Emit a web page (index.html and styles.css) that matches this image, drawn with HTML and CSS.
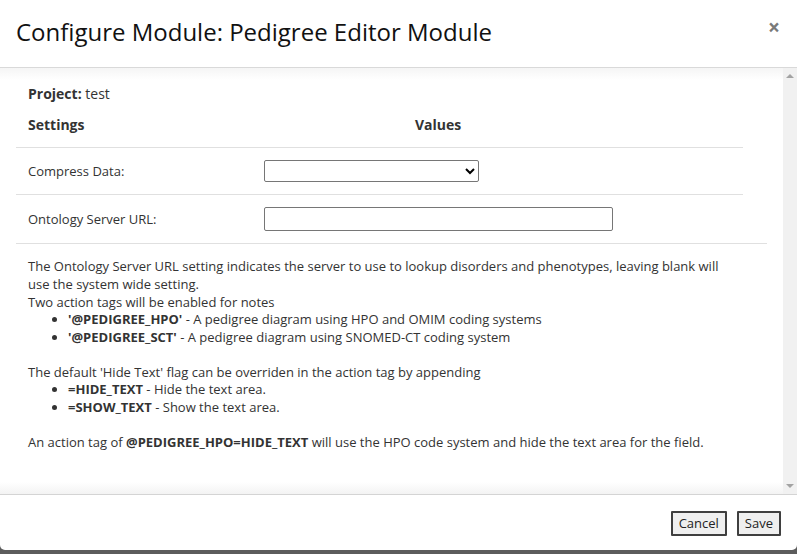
FILE: index.html
```html
<!DOCTYPE html>
<html>
<head>
<meta charset="utf-8">
<link rel="stylesheet" href="styles.css">
</head>
<body>
<div class="modal">
  <div class="header">
    <h1 class="title">Configure Module: Pedigree Editor Module</h1>
    <span class="close">×</span>
  </div>
  <div class="middle">
    <div class="pane">
      <div class="project"><b>Project:</b> test</div>
      <div class="grid-row head">
        <div class="cell-label"><b>Settings</b></div>
        <div class="cell-value values-head"><b>Values</b></div>
      </div>
      <div class="grid-row r1">
        <div class="cell-label">Compress Data:</div>
        <div class="cell-value"><select class="sel"><option></option></select></div>
      </div>
      <div class="grid-row r2">
        <div class="cell-label">Ontology Server URL:</div>
        <div class="cell-value"><input class="txt" type="text"></div>
      </div>
      <div class="desc">
        <div class="desc-inner">
          <div>The Ontology Server URL setting indicates the server to use to lookup disorders and phenotypes, leaving blank will use the system wide setting.</div>
          <div>Two action tags will be enabled for notes</div>
          <ul>
            <li><b>'@PEDIGREE_HPO'</b> - A pedigree diagram using HPO and OMIM coding systems</li>
            <li><b>'@PEDIGREE_SCT'</b> - A pedigree diagram using SNOMED-CT coding system</li>
          </ul>
          <div>The default 'Hide Text' flag can be overriden in the action tag by appending</div>
          <ul>
            <li><b>=HIDE_TEXT</b> - Hide the text area.</li>
            <li><b>=SHOW_TEXT</b> - Show the text area.</li>
          </ul>
          <div>An action tag of <b>@PEDIGREE_HPO=HIDE_TEXT</b> will use the HPO code system and hide the text area for the field.</div>
        </div>
      </div>
    </div>
    <div class="scrollbar">
      <span class="arrow up"></span>
      <span class="arrow down"></span>
    </div>
  </div>
  <div class="footer">
    <button class="btn">Cancel</button>
    <button class="btn">Save</button>
  </div>
</div>
</body>
</html>
```
FILE: styles.css
```css
html, body {
  margin: 0;
  padding: 0;
}
body {
  background: #5c5c5c;
  font-family: "Open Sans", "DejaVu Sans", sans-serif;
  color: #333;
  width: 797px;
  height: 554px;
  overflow: hidden;
}
.modal {
  height: 550px;
  background: #fff;
  border-radius: 0 0 5px 5px;
  display: flex;
  flex-direction: column;
  overflow: hidden;
}
.header {
  height: 67px;
  flex: none;
  border-bottom: 1px solid #d9d9d9;
  display: flex;
  align-items: center;
  justify-content: space-between;
  padding: 0 17px 0 16px;
}
.title {
  margin: -3px 0 0;
  font-size: 24px;
  font-weight: 400;
  color: #111;
  line-height: 30px;
}
.close {
  font-size: 21px;
  font-weight: 700;
  color: #7a7a7a;
  line-height: 1;
  margin-top: -12px;
}
.middle {
  flex: 1;
  display: flex;
  min-height: 0;
}
.pane {
  flex: 1;
  padding: 16px 16px 0 16px;
  font-size: 13px;
  line-height: 18px;
  background: linear-gradient(#f5f5f5, #fff 12px, #fff calc(100% - 12px), #f3f3f3);
}
.project {
  font-size: 14px;
  line-height: 20px;
  padding: 0 12px;
}
.grid-row {
  width: 727px;
  display: grid;
  grid-template-columns: 236px 1fr;
  align-items: center;
}
.cell-label {
  padding: 0 12px;
}
.cell-value {
  padding: 0 12px;
}
.head {
  font-size: 14px;
  line-height: 20px;
  padding: 11px 0 12px;
}
.values-head {
  padding-left: 163px;
}
.r1 {
  border-top: 1px solid #e0e0e0;
  height: 46px;
}
.r2 {
  border-top: 1px solid #e0e0e0;
  height: 48px;
}
.sel {
  width: 215px;
  height: 22px;
  border: 1px solid #767676;
  border-radius: 2px;
  background: #fff;
  font-family: inherit;
  font-size: 13px;
  display: block;
}
.txt {
  width: 349px;
  height: 24px;
  box-sizing: border-box;
  border: 1px solid #767676;
  border-radius: 2px;
  display: block;
  margin: 0;
  padding: 0 4px;
}
.desc {
  border-top: 1px solid #e0e0e0;
  padding: 13px 12px 0;
}
.desc-inner {
  width: 703px;
}
.desc ul {
  margin: -1px 0 17px;
  padding-left: 40px;
}
.desc li {
  line-height: 18px;
}
.scrollbar {
  width: 14px;
  flex: none;
  background: #f1f1f1;
  position: relative;
}
.arrow {
  position: absolute;
  left: 3px;
  width: 0;
  height: 0;
  border-left: 4px solid transparent;
  border-right: 4px solid transparent;
}
.arrow.up {
  top: 6px;
  border-bottom: 4px solid #a3a3a3;
}
.arrow.down {
  bottom: 6px;
  border-top: 4px solid #a3a3a3;
}
.footer {
  flex: none;
  border-top: 1px solid #d4d4d4;
  display: flex;
  justify-content: flex-end;
  align-items: flex-start;
  gap: 10px;
  padding: 16px 16px 0 0;
  box-sizing: border-box;
  height: 56px;
}
.btn {
  height: 25px;
  font-family: inherit;
  font-size: 13px;
  color: #222;
  background: #efefef;
  border: 2px solid #3f3f3f;
  border-radius: 1px;
  padding: 0 6px;
  line-height: 19px;
}
```
